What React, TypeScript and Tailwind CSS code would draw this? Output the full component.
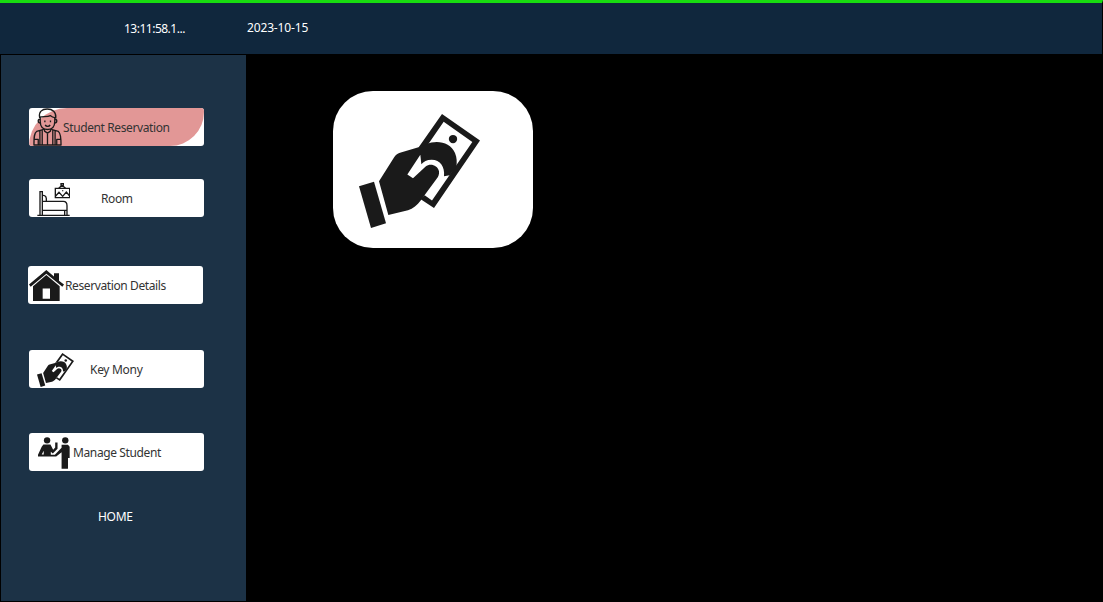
import type { ReactNode } from "react";

const INK = "#1a1a1a";

function MoneyHand({ className }: { className: string }) {
  return (
    <svg viewBox="102 87 363 341" preserveAspectRatio="none" className={className}>
      <path fill={INK} fillRule="evenodd" d="M351 87 465 166 327 368 286 341 299 330 321 346 442 171 356 110 307 181 280 188Z" />
      <circle cx="384" cy="162" r="12.5" fill={INK} />
      <path fill={INK} d="M304 178C335 163 377 172 390 204C396 218 396 232 394 246L374 270L357 273C360 246 346 224 320 224C305 224 296 230 289 237L286 209L247 268L264 279L302 244C315 233 338 240 342 258C343 268 340 274 335 281L298 331L287 346C277 360 264 371 249 375L190 389L162 288L207 217C212 209 217 206 225 203L288 184Z" />
      <path fill={INK} d="M102 303 147 290 183 414 138 428Z" />
    </svg>
  );
}

function StudentIcon({ className }: { className: string }) {
  return (
    <svg viewBox="40 22 86 115" className={className} fill="none" stroke={INK} strokeWidth="4" strokeLinejoin="round">
      <path d="M59 50C56 34 66 25 82 25S110 34 108 52C101 51 96 50 92 45C82 50 70 47 59 50Z" />
      <path d="M61 50V62C61 78 70 87 83 87S105 78 105 62V52M60 56C53 55 53 68 61 68M106 56C113 55 113 68 105 68" />
      <path d="M75 60V65M92 60V65M76 73C79 79 88 79 91 73M74 85V92L83 98 92 92V85" />
      <path d="M72 87 50 93C43 97 42 108 42 134H124C124 110 123 98 116 93L94 87M60 91V134M67 90V134M99 90V134M106 91V134M83 99V134M43 117H55V134M111 134V117H123" />
    </svg>
  );
}

function BedIcon({ className }: { className: string }) {
  return (
    <svg viewBox="51 33 99 99" className={className} fill="none" stroke={INK} strokeWidth="4">
      <path d="M60 129V59H67V129M68 70C77 69 80 76 79 87M68 88H130C138 88 141 94 141 101V129M68 115H141M134 115V129M52 130H149" />
      <path d="M106 49H149V77H106ZM116 49 126 40 137 49M123 41V35H130V41M107 72 117 61 128 73 139 60 149 72M128 55V58" />
    </svg>
  );
}

function HouseIcon({ className }: { className: string }) {
  return (
    <svg viewBox="27 29 105 92" preserveAspectRatio="none" className={className}>
      <path fill={INK} d="M79 29 102 48V39H117V61L132 72 127 79 79 40 32 79 27 72Z" />
      <path fill={INK} d="M79 44 119 77V121H39V77Z" />
      <path fill="#fff" d="M68 84H90V114H68Z" />
    </svg>
  );
}

function ManageIcon({ className }: { className: string }) {
  return (
    <svg viewBox="53 35 95 95" className={className} fill={INK}>
      <circle cx="80" cy="45" r="9.5" />
      <circle cx="134" cy="45" r="9.5" />
      <path d="M69 57H90L98 73 104 66V51H111V70L97 84 91 79V88H103L123 67V58H142L147 64V97H142V129H123V80L107 93H53V88L64 64ZM70 76 64 87H70Z" fillRule="evenodd" />
    </svg>
  );
}

function MenuButton({ label, textClass, className, children }: { label: string; textClass: string; className: string; children: ReactNode }) {
  return (
    <button className={`relative flex h-[38px] w-[175px] shrink-0 items-center overflow-hidden rounded-[3px] bg-white text-left text-[#333] ${className}`}>
      {children}
      <span className={`relative mt-[2px] whitespace-nowrap ${textClass}`}>{label}</span>
    </button>
  );
}

export default function App() {
  return (
    <div className="flex h-[602px] w-[1103px] flex-col overflow-hidden bg-black font-['Noto_Sans','Open_Sans',sans-serif] text-[12px] leading-[16px] text-white">
      <header className="flex h-[54px] shrink-0 border-t-[3px] border-r border-t-[#18dc10] border-r-black bg-[#10273d]">
        <span className="mt-[18px] ml-[124px] w-[123px] tracking-[-0.5px]">13:11:58.1...</span>
        <span className="mt-[17px] tracking-[-0.15px]">2023-10-15</span>
      </header>
      <div className="flex min-h-0 flex-1">
        <nav className="flex w-[247px] shrink-0 flex-col border border-black bg-[#1c3246]">
          <MenuButton label="Student Reservation" textClass="ml-[1px] tracking-[-0.39px]" className="mt-[53px] ml-[28px]">
            <span className="absolute inset-0 rounded-tl-[38px] rounded-br-[34px] bg-[#e29796]" />
            <StudentIcon className="relative ml-[4px] h-[38px] w-[29px]" />
          </MenuButton>
          <MenuButton label="Room" textClass="ml-[31px] tracking-[-0.4px]" className="mt-[33px] ml-[28px]">
            <BedIcon className="mt-[3px] ml-[8px] h-[33px] w-[33px]" />
          </MenuButton>
          <MenuButton label="Reservation Details" textClass="ml-[1px] tracking-[-0.39px]" className="mt-[49px] ml-[27px]">
            <HouseIcon className="ml-[1px] h-[31px] w-[35px]" />
          </MenuButton>
          <MenuButton label="Key Mony" textClass="ml-[16px] tracking-[-0.3px]" className="mt-[46px] ml-[28px]">
            <MoneyHand className="mt-[2px] ml-[8px] h-[34px] w-[37px]" />
          </MenuButton>
          <MenuButton label="Manage Student" textClass="ml-[3px] tracking-[-0.38px]" className="mt-[45px] ml-[28px]">
            <ManageIcon className="mt-[2px] ml-[9px] h-[32px] w-[32px]" />
          </MenuButton>
          <button className="mt-[38px] ml-[97px] self-start tracking-[-0.3px]">HOME</button>
        </nav>
        <main className="flex-1 pt-[37px] pl-[86px]">
          <section className="h-[157px] w-[200px] rounded-[40px] bg-white pt-[23px] pl-[26px]">
            <MoneyHand className="h-[114px] w-[121px]" />
          </section>
        </main>
      </div>
    </div>
  );
}
